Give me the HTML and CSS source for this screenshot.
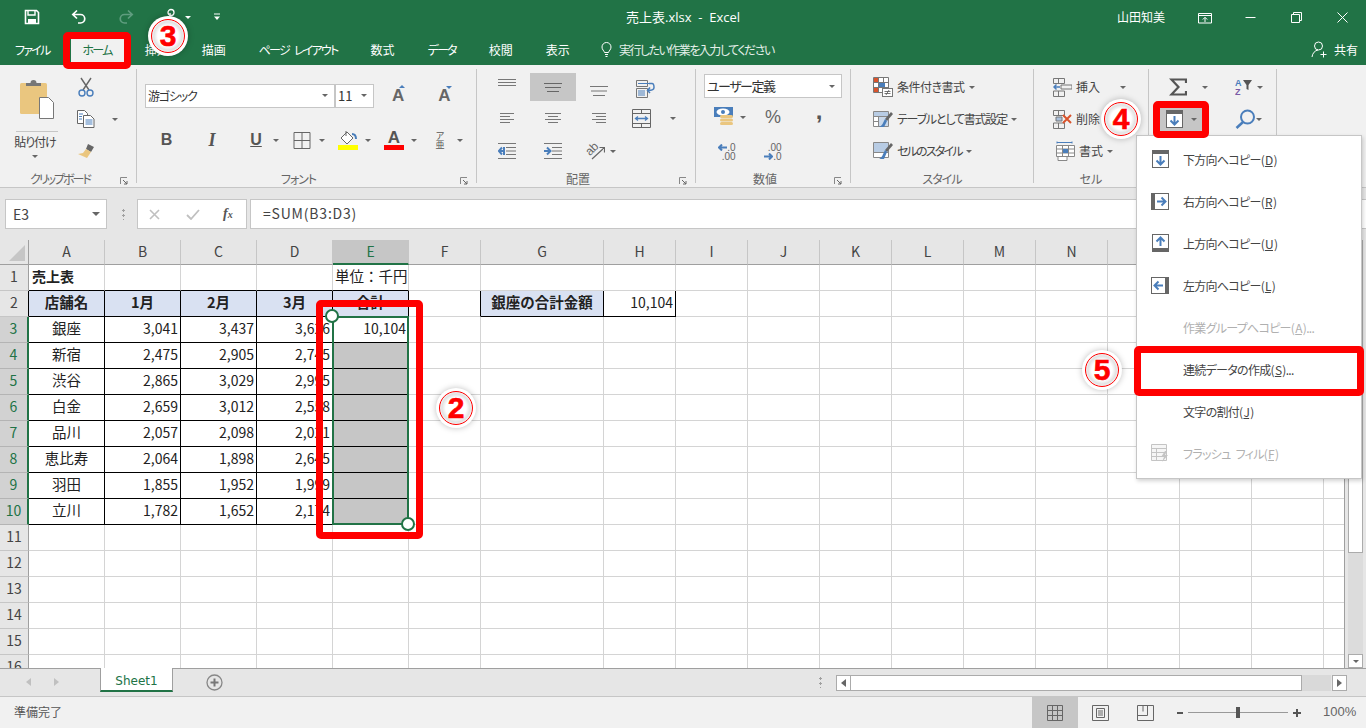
FILE: index.html
```html
<!DOCTYPE html>
<html lang="ja">
<head>
<meta charset="utf-8">
<title>売上表.xlsx - Excel</title>
<link rel="stylesheet" href="styles.css">
</head>
<body>
<div class="app">
  <header class="titlebar">
    <div class="qat">
      <svg class="q-save" width="16" height="16" viewBox="0 0 16 16"><path d="M1.5 1.5h11l2 2v11h-13z" fill="none" stroke="#fff" stroke-width="1.6"/><path d="M4 2v4h7V2" fill="none" stroke="#fff" stroke-width="1.4"/><rect x="4" y="10" width="8" height="5" fill="#fff"/></svg>
      <svg class="q-undo" width="16" height="16" viewBox="0 0 16 16"><path d="M6 1.5 1.8 5.5 6 9.5M2 5.5h7.5a4.2 4.2 0 0 1 0 8.5H7" fill="none" stroke="#fff" stroke-width="1.7"/></svg>
      <svg class="q-redo" width="16" height="16" viewBox="0 0 16 16"><path d="M10 1.5l4.2 4-4.2 4M14 5.5H6.500a4.200 4.200 0 0 0 0 8.500H9" fill="none" stroke="#5f9d7f" stroke-width="1.700"/></svg>
      <svg class="q-touch" width="14" height="18" viewBox="0 0 14 18"><circle cx="7" cy="4.500" r="3" fill="none" stroke="#fff" stroke-width="1.300"/><path d="M6 5v9M3 10l3 6h5l1-5-5-2" fill="none" stroke="#fff" stroke-width="1.300"/></svg>
      <i class="caret caret-w q-touch-c"></i>
      <svg class="q-more" width="8" height="8" viewBox="0 0 8 8"><path d="M1 1h6" stroke="#fff"/><path d="M1 3.500h6L4 7z" fill="#fff"/></svg>
    </div>
    <div class="doc-title">売上表.xlsx&nbsp; -&nbsp; Excel</div>
    <div class="winctl">
      <span class="user">山田知美</span>
      <svg class="w-ribbon" width="14" height="12" viewBox="0 0 14 12"><path d="M.5 1.500h13v9.500H.5zM.5 3.500h13M7 10V5.500M4.800 7.500 7 5.300l2.200 2.200" fill="none" stroke="#fff"/></svg>
      <svg class="w-min" width="11" height="11" viewBox="0 0 11 11"><path d="M.500 5.500h10" stroke="#fff"/></svg>
      <svg class="w-max" width="11" height="11" viewBox="0 0 11 11"><path d="M.500 2.500h8v8h-8zM2.500 2.500V.500h8v8h-2" fill="none" stroke="#fff"/></svg>
      <svg class="w-close" width="11" height="11" viewBox="0 0 11 11"><path d="M.500.500l10 10M10.500.500l-10 10" stroke="#fff"/></svg>
    </div>
  </header>

  <nav class="tabs">
    <span class="tab tab-k">ファイル</span>
    <span class="tab tab-k tab-on">ホーム</span>
    <span class="tab">挿入</span>
    <span class="tab">描画</span>
    <span class="tab tab-k">ページ レイアウト</span>
    <span class="tab">数式</span>
    <span class="tab tab-k">データ</span>
    <span class="tab">校閲</span>
    <span class="tab">表示</span>
    <span class="tell">
      <svg width="11" height="15" viewBox="0 0 11 15"><path d="M3.500 10.500C3 8.500 1 7.800 1 5a4.500 4.500 0 0 1 9 0c0 2.800-2 3.500-2.500 5.500zM4 12.500h3M4.500 14.500h2" fill="none" stroke="#fff"/></svg>
      <span class="tell-t">実行したい作業を入力してください</span>
    </span>
    <span class="share">
      <svg width="17" height="17" viewBox="0 0 17 17"><circle cx="7.500" cy="5" r="4" fill="none" stroke="#fff"/><path d="M1 16c.5-4 3-6.500 6-7M12.500 10.500v6M9.500 13.500h6" fill="none" stroke="#fff"/></svg>
      共有
    </span>
  </nav>

  <section class="ribbon">
    <div class="group g-clip">
      <div class="body clip-body">
        <div class="paste">
          <svg width="36" height="42" viewBox="0 0 36 42"><rect x="1" y="5" width="27" height="31" rx="1.500" fill="#eac67f"/><path d="M7 8V5h4.500a3 3 0 0 1 6 0H22v3z" fill="#777"/><path d="M20.500 19.500h9l5 5v16h-14z" fill="#fff" stroke="#777"/></svg>
          <hr class="paste-rule">
          <span class="paste-label">貼り付け</span>
          <i class="caret"></i>
        </div>
        <div class="clip-tools">
          <div class="clip-row"><svg width="18" height="20" viewBox="0 0 18 20"><path d="M4 1l8 12M14 1L6 13" stroke="#666" stroke-width="1.400" fill="none"/><circle cx="5" cy="16" r="3" fill="none" stroke="#4a7ebb" stroke-width="1.400"/><circle cx="13" cy="16" r="3" fill="none" stroke="#4a7ebb" stroke-width="1.400"/></svg></div>
          <div class="clip-row clip-copy"><svg width="18" height="18" viewBox="0 0 18 18"><path d="M.500.500h7l3 3v10H.500z" fill="#fff" stroke="#666"/><path d="M6.500 5.500h7l3.500 3.500v8.500H6.500z" fill="#fff" stroke="#666"/><path d="M2 4h4M2 6.500h3M2 9h3M8.500 10h7M8.500 12h7M8.500 14h7" stroke="#4a7ebb"/></svg><i class="caret caret-copy"></i></div>
          <div class="clip-row"><svg width="18" height="16" viewBox="0 0 18 16"><path d="M11 1l6 3-3 5-5-3z" fill="#666"/><path d="M9 6l5 3-4 6-9-4 5-1z" fill="#eac67f"/></svg></div>
        </div>
      </div>
      <div class="label-row"><span class="label lab-clip">クリップボード</span><svg class="launch" width="8" height="8" viewBox="0 0 8 8"><path d="M.500 7V.500H7" fill="none" stroke="#888"/><path d="M3 3l4 4M7 4v3H4" fill="none" stroke="#666"/></svg></div>
    </div>

    <div class="group g-font">
      <div class="body font-body">
        <div class="font-row1">
          <div class="sel sel-font">游ゴシック<i class="caret"></i></div>
          <div class="sel sel-size">11<i class="caret"></i></div>
          <span class="grow"><b class="glyph-a">A</b><i class="tri-up"></i></span>
          <span class="shrink"><b class="glyph-a">A</b><i class="tri-down"></i></span>
        </div>
        <div class="font-row2">
          <b class="fbtn f-b">B</b>
          <b class="fbtn f-i">I</b>
          <div class="ftool"><b class="f-u">U</b><i class="caret"></i></div>
          <div class="ftool"><svg width="20" height="17" viewBox="0 0 17 17"><path d="M.500.500h16v16H.500zM8.500.500v16M.500 8.500h16" fill="none" stroke="#666"/></svg><i class="caret"></i></div>
          <div class="ftool"><span class="stack"><svg width="20" height="14" viewBox="0 0 20 14"><path d="M9 1l6 6-6 6-6-6z" fill="#fff" stroke="#666"/><path d="M8 0v5" stroke="#666"/><path d="M14 3c3 0 4 2 4 5" fill="none" stroke="#4a7ebb" stroke-width="2"/></svg><i class="bar bar-y"></i></span><i class="caret"></i></div>
          <div class="ftool"><span class="stack"><b class="f-color">A</b><i class="bar bar-r"></i></span><i class="caret"></i></div>
          <div class="ftool"><span class="phon"><span>ア</span><span>亜</span></span><i class="caret"></i></div>
        </div>
      </div>
      <div class="label-row"><span class="label lab-k">フォント</span><svg class="launch" width="8" height="8" viewBox="0 0 8 8"><path d="M.500 7V.500H7" fill="none" stroke="#888"/><path d="M3 3l4 4M7 4v3H4" fill="none" stroke="#666"/></svg></div>
    </div>

    <div class="group g-align">
      <div class="body align-body">
        <div class="acell"><svg class="ic-top" width="18" height="7" viewBox="0 0 18 7"><path d="M0 .500h18M0 3.500h18M0 6.500h18" stroke="#777"/></svg></div>
        <div class="acell acell-on"><svg width="18" height="9" viewBox="0 0 18 9"><path d="M0 .500h18M1 4.500h16M3 8.500h12" stroke="#666"/></svg></div>
        <div class="acell"><svg class="ic-bot" width="18" height="10" viewBox="0 0 18 10"><path d="M0 .500h18M1 5h16M3 9.500h12" stroke="#777"/></svg></div>
        <div class="acell acell-wrap"><svg width="19" height="18" viewBox="0 0 19 18"><path d="M.500.500h11v6H.500zM.500 8.500h11v9H.500z" fill="none" stroke="#777"/><path d="M2 3.500h11M2 11h7M2 13h7M2 15h7" stroke="#4a7ebb"/><path d="M13 3.500h3c2 0 2 2 2 4 0 2-3 3-6 3M14 7.500l-2.500 3L14 13" fill="none" stroke="#4a7ebb" stroke-width="1.500"/></svg></div>

        <div class="acell"><svg width="14" height="10" viewBox="0 0 14 10"><path d="M0 .500h14M0 3.500h10M0 6.500h14M0 9.500h10" stroke="#777"/></svg></div>
        <div class="acell"><svg width="16" height="10" viewBox="0 0 16 10"><path d="M0 .500h16M3 3.500h10M0 6.500h16M3 9.500h10" stroke="#777"/></svg></div>
        <div class="acell"><svg width="14" height="10" viewBox="0 0 14 10"><path d="M0 .500h14M4 3.500h10M0 6.500h14M4 9.500h10" stroke="#777"/></svg></div>
        <div class="acell acell-merge"><svg width="19" height="19" viewBox="0 0 19 19"><path d="M.500.500h18v18H.500zM.500 4.500h18M.500 14.500h18M9.500.500v4M9.500 14.500v4" fill="none" stroke="#666"/><path d="M3.500 9.500h12M6 7.500l-2.500 2L6 11.500M13 7.500l2.500 2-2.500 2" fill="none" stroke="#4a7ebb" stroke-width="1.300"/></svg><i class="caret caret-merge"></i></div>

        <div class="acell"><svg width="18" height="16" viewBox="0 0 18 16"><path d="M0 .500h18M8 4.500h10M8 8h10M8 11.500h10M0 15.500h18" stroke="#777"/><path d="M6 4v8M6 8H1M4 4.500 .800 8 4 11.500" fill="none" stroke="#4a7ebb" stroke-width="2"/></svg></div>
        <div class="acell"><svg width="18" height="16" viewBox="0 0 18 16"><path d="M0 .500h18M8 4.500h10M8 8h10M8 11.500h10M0 15.500h18" stroke="#777"/><path d="M0 8h6M3 4.500 6.500 8 3 11.500" fill="none" stroke="#4a7ebb" stroke-width="2"/></svg></div>
        <div class="acell acell-orient"><svg width="19" height="18" viewBox="0 0 19 18"><path d="M6 17 18 6M13.500 5.500H18.500V10.500" fill="none" stroke="#666" stroke-width="1.200"/><text x="0" y="11" class="orient-t" transform="rotate(-45 6 8)">ab</text></svg><i class="caret"></i></div>
        <div class="acell"></div>
      </div>
      <div class="label-row"><span class="label">配置</span><svg class="launch" width="8" height="8" viewBox="0 0 8 8"><path d="M.500 7V.500H7" fill="none" stroke="#888"/><path d="M3 3l4 4M7 4v3H4" fill="none" stroke="#666"/></svg></div>
    </div>

    <div class="group g-num">
      <div class="body num-body">
        <div class="sel sel-num">ユーザー定義<i class="caret"></i></div>
        <div class="num-row">
          <div class="ncell ncell-cur"><svg width="19" height="20" viewBox="0 0 19 20"><rect x="0" y="0" width="19" height="10" fill="#4a7ebb"/><ellipse cx="9" cy="5" rx="6.500" ry="3.500" fill="#fff"/><circle cx="9" cy="5" r="2" fill="#4a7ebb"/><rect x="6" y="8" width="13" height="3" rx="1.500" fill="#eac67f"/><rect x="6" y="11.500" width="13" height="3" rx="1.500" fill="#eac67f"/><rect x="6" y="15" width="13" height="3" rx="1.500" fill="#eac67f"/></svg><i class="caret"></i></div>
          <div class="ncell n-pct">%</div>
          <div class="ncell n-comma">,</div>
        </div>
        <div class="num-row num-row2">
          <div class="ncell"><div class="dec dec-a"><div><svg width="9" height="7" viewBox="0 0 9 7"><path d="M4 .500 1 3.500l3 3M1 3.500h8" fill="none" stroke="#4a7ebb" stroke-width="2"/></svg>.0</div><div>.00</div></div></div>
          <div class="ncell"><div class="dec dec-b"><div>.00</div><div><svg width="9" height="7" viewBox="0 0 9 7"><path d="M5 .500l3 3-3 3M8 3.500H0" fill="none" stroke="#4a7ebb" stroke-width="2"/></svg>.0</div></div></div>
          <div class="ncell"></div>
        </div>
      </div>
      <div class="label-row"><span class="label">数値</span><svg class="launch" width="8" height="8" viewBox="0 0 8 8"><path d="M.500 7V.500H7" fill="none" stroke="#888"/><path d="M3 3l4 4M7 4v3H4" fill="none" stroke="#666"/></svg></div>
    </div>

    <div class="group g-style">
      <div class="body list-body">
        <div class="lrow"><svg width="20" height="20" viewBox="0 0 20 20"><path d="M.500.500h15v15H.500zM.500 5.500h15M.500 10.500h15M5.500.500v15M10.500.500v15" fill="#fff" stroke="#777"/><rect x="1" y="1" width="4" height="4" fill="#d9532c"/><rect x="6" y="6" width="6" height="4" fill="#4a7ebb"/><rect x="1" y="11" width="4" height="4" fill="#d9532c"/><rect x="9.500" y="11.500" width="10" height="8" fill="#fff" stroke="#777"/><path d="M11.500 14.500h6M11.500 16.500h6M13 18l3-5" stroke="#555" stroke-width=".8"/></svg><span class="ls1">条件付き書式</span><i class="caret"></i></div>
        <div class="lrow"><svg width="20" height="20" viewBox="0 0 20 20"><path d="M.500 2.500h15v15H.500zM.500 7.500h15M.500 12.500h15M5.500 2.500v15M10.500 2.500v15" fill="#fff" stroke="#888"/><rect x="1" y="3" width="14" height="4" fill="#b8cce4"/><rect x="6" y="8" width="9" height="9" fill="#c9d8ea"/><path d="M18 3l2 2-6 7-2-2z" fill="#666"/><path d="M12 10l2 2-3 6H6c3-1 4-4 6-8z" fill="#4a7ebb"/></svg><span class="ls2">テーブルとして書式設定</span><i class="caret"></i></div>
        <div class="lrow"><svg width="20" height="20" viewBox="0 0 20 20"><path d="M.500 1.500h15v15H.500zM.500 6.500h15M.500 11.500h15" fill="#fff" stroke="#888"/><rect x="1" y="2" width="14" height="9" fill="#b8cce4"/><path d="M18 2l2 2-6 7-2-2z" fill="#666"/><path d="M12 9l2 2-3 7H6c3-1 4-5 6-9z" fill="#4a7ebb"/></svg><span class="ls3">セルのスタイル</span><i class="caret"></i></div>
      </div>
      <div class="label-row"><span class="label lab-k">スタイル</span></div>
    </div>

    <div class="group g-cells">
      <div class="body list-body">
        <div class="lrow"><svg width="19" height="19" viewBox="0 0 19 19"><path d="M.500.500h11v5H.500zM5.500.500v5M.500 13h11v5.500H.500zM5.500 13v5.500M8 7h11v4H8z" fill="none" stroke="#777"/><path d="M7 9H1M3.500 6.500 1 9l2.500 2.500" fill="none" stroke="#4a7ebb" stroke-width="1.500"/></svg><span class="cell-t">挿入</span><i class="caret caret-ins"></i></div>
        <div class="lrow"><svg width="19" height="19" viewBox="0 0 19 19"><path d="M.500.500h11v5H.500zM5.500.500v5M.500 13h11v5.500H.500zM5.500 13v5.500" fill="none" stroke="#777"/><path d="M3 7h6v4H3z" fill="#a9c0dc" stroke="#777"/><path d="M10 5l8 8M18 5l-8 8" stroke="#d9532c" stroke-width="2"/></svg><span class="cell-t">削除</span></div>
        <div class="lrow lrow-fmt"><svg width="19" height="20" viewBox="0 0 19 20"><path d="M1 1.500h15M1 .500v2M16 .500v2" stroke="#4a7ebb"/><path d="M.500 4.500h18v11H.500zM6.500 4.500v11M12.500 4.500v11M.500 8h18M.500 12h18M2 15.500v4h9v-4" fill="#fff" stroke="#888"/><rect x="7" y="8" width="5" height="4" fill="#4a7ebb"/></svg><span class="cell-t">書式</span><i class="caret"></i></div>
      </div>
      <div class="label-row"><span class="label">セル</span></div>
    </div>

    <div class="group g-edit">
      <div class="body edit-body">
        <div class="ecell ecell-sum"><svg width="18" height="18" viewBox="0 0 18 18"><path d="M17 5V1.500H2.500L9.500 9l-7 7.500H17V13" fill="none" stroke="#555" stroke-width="2.200"/></svg><i class="caret"></i></div>
        <div class="ecell2"><svg width="18" height="18" viewBox="0 0 18 18"><text x="0" y="8" class="az az-a">A</text><text x="0" y="17" class="az az-z">Z</text><path d="M8 2h9l-3.500 5v5l-2-1V7z" fill="#555"/></svg><i class="caret"></i></div>
        <div class="ecell fill-on"><svg width="17" height="18" viewBox="0 0 17 18"><rect x=".5" y=".5" width="16" height="17" fill="#fff" stroke="#666"/><rect x="0" y="0" width="17" height="4" fill="#666"/><path d="M8.500 6v9M4.500 10.500l4 4 4-4" fill="none" stroke="#4a7ebb" stroke-width="2"/></svg><i class="caret"></i></div>
        <div class="ecell2 ecell-find"><svg width="21" height="20" viewBox="0 0 21 20"><circle cx="12.500" cy="8" r="6.500" fill="none" stroke="#4a7ebb" stroke-width="2"/><path d="M8 13 1.500 19" stroke="#4a7ebb" stroke-width="2.500"/></svg><i class="caret"></i></div>
      </div>
      <div class="label-row"></div>
    </div>
  </section>

  <section class="formula">
    <div class="namebox">E3<i class="caret caret-name"></i></div>
    <span class="fdots"></span>
    <div class="fbox">
      <svg width="11" height="11" viewBox="0 0 11 11"><path d="M1 1l9 9M10 1l-9 9" stroke="#c0c0c0" stroke-width="1.600"/></svg>
      <svg width="14" height="11" viewBox="0 0 14 11"><path d="M1 6l4 4 8-9" fill="none" stroke="#c0c0c0" stroke-width="1.800"/></svg>
      <span class="fx">f<small>x</small></span>
    </div>
    <div class="finput">=SUM(B3:D3)</div>
  </section>

  <section class="sheet">
    <div class="sheet-view">
      <table class="grid">
        <colgroup><col class="c-rh"><col class="c-w"><col class="c-w"><col class="c-w"><col class="c-w"><col class="c-w"><col class="c-n"><col class="c-g"><col class="c-n"><col class="c-n"><col class="c-n"><col class="c-n"><col class="c-n"><col class="c-n"><col class="c-n"><col class="c-n"><col class="c-n"><col class="c-n"><col class="c-r"></colgroup>
        <thead>
          <tr><th class="corner"><i class="corner-tri"></i></th><th>A</th><th>B</th><th>C</th><th>D</th><th class="h-on">E</th><th>F</th><th>G</th><th>H</th><th>I</th><th>J</th><th>K</th><th>L</th><th>M</th><th>N</th><th>O</th><th>P</th><th>Q</th><th>R</th></tr>
        </thead>
        <tbody>
          <tr><th class="rh">1</th><td class="title bb">売上表</td><td class="bb"></td><td class="bb"></td><td class="bb"></td><td class="num bb unit">単位&#xFF1A;千円</td><td></td><td></td><td></td><td></td><td></td><td></td><td></td><td></td><td></td><td></td><td></td><td></td><td></td></tr>
          <tr><th class="rh rh-b">2</th><td class="hd">店舗名</td><td class="hd">1月</td><td class="hd">2月</td><td class="hd">3月</td><td class="hd">合計</td><td class="bl"></td><td class="hd-g">銀座の合計金額</td><td class="num k">10,104</td><td></td><td></td><td></td><td></td><td></td><td></td><td></td><td></td><td></td><td></td></tr>
          <tr><th class="rh rh-on">3</th><td class="ctr k">銀座</td><td class="num k">3,041</td><td class="num k">3,437</td><td class="num k">3,626</td><td class="num k">10,104</td><td class="tb"></td><td class="tb"></td><td class="tb"></td><td></td><td></td><td></td><td></td><td></td><td></td><td></td><td></td><td></td><td></td></tr>
          <tr><th class="rh rh-on">4</th><td class="ctr k">新宿</td><td class="num k">2,475</td><td class="num k">2,905</td><td class="num k">2,745</td><td class="k sel-c"></td><td></td><td></td><td></td><td></td><td></td><td></td><td></td><td></td><td></td><td></td><td></td><td></td><td></td></tr>
          <tr><th class="rh rh-on">5</th><td class="ctr k">渋谷</td><td class="num k">2,865</td><td class="num k">3,029</td><td class="num k">2,995</td><td class="k sel-c"></td><td></td><td></td><td></td><td></td><td></td><td></td><td></td><td></td><td></td><td></td><td></td><td></td><td></td></tr>
          <tr><th class="rh rh-on">6</th><td class="ctr k">白金</td><td class="num k">2,659</td><td class="num k">3,012</td><td class="num k">2,558</td><td class="k sel-c"></td><td></td><td></td><td></td><td></td><td></td><td></td><td></td><td></td><td></td><td></td><td></td><td></td><td></td></tr>
          <tr><th class="rh rh-on">7</th><td class="ctr k">品川</td><td class="num k">2,057</td><td class="num k">2,098</td><td class="num k">2,021</td><td class="k sel-c"></td><td></td><td></td><td></td><td></td><td></td><td></td><td></td><td></td><td></td><td></td><td></td><td></td><td></td></tr>
          <tr><th class="rh rh-on">8</th><td class="ctr k">恵比寿</td><td class="num k">2,064</td><td class="num k">1,898</td><td class="num k">2,645</td><td class="k sel-c"></td><td></td><td></td><td></td><td></td><td></td><td></td><td></td><td></td><td></td><td></td><td></td><td></td><td></td></tr>
          <tr><th class="rh rh-on">9</th><td class="ctr k">羽田</td><td class="num k">1,855</td><td class="num k">1,952</td><td class="num k">1,999</td><td class="k sel-c"></td><td></td><td></td><td></td><td></td><td></td><td></td><td></td><td></td><td></td><td></td><td></td><td></td><td></td></tr>
          <tr><th class="rh rh-on">10</th><td class="ctr k">立川</td><td class="num k">1,782</td><td class="num k">1,652</td><td class="num k">2,174</td><td class="k sel-c"></td><td></td><td></td><td></td><td></td><td></td><td></td><td></td><td></td><td></td><td></td><td></td><td></td><td></td></tr>
          <tr><th class="rh">11</th><td></td><td></td><td></td><td></td><td></td><td></td><td></td><td></td><td></td><td></td><td></td><td></td><td></td><td></td><td></td><td></td><td></td><td></td></tr>
          <tr><th class="rh">12</th><td></td><td></td><td></td><td></td><td></td><td></td><td></td><td></td><td></td><td></td><td></td><td></td><td></td><td></td><td></td><td></td><td></td><td></td></tr>
          <tr><th class="rh">13</th><td></td><td></td><td></td><td></td><td></td><td></td><td></td><td></td><td></td><td></td><td></td><td></td><td></td><td></td><td></td><td></td><td></td><td></td></tr>
          <tr><th class="rh">14</th><td></td><td></td><td></td><td></td><td></td><td></td><td></td><td></td><td></td><td></td><td></td><td></td><td></td><td></td><td></td><td></td><td></td><td></td></tr>
          <tr><th class="rh">15</th><td></td><td></td><td></td><td></td><td></td><td></td><td></td><td></td><td></td><td></td><td></td><td></td><td></td><td></td><td></td><td></td><td></td><td></td></tr>
          <tr><th class="rh">16</th><td></td><td></td><td></td><td></td><td></td><td></td><td></td><td></td><td></td><td></td><td></td><td></td><td></td><td></td><td></td><td></td><td></td><td></td></tr>
        </tbody>
      </table>
      <div class="selection"></div>
      <i class="handle handle-a"></i>
      <i class="handle handle-b"></i>
    </div>
    <div class="vscroll">
      <div class="vs-btn"><i class="tri-up-s"></i></div>
      <div class="vs-thumb"></div>
      <div class="vs-track"></div>
      <div class="vs-btn"><i class="caret"></i></div>
    </div>
  </section>

  <section class="sheetbar">
    <div class="nav-arrows"><i class="nav-l"></i><i class="nav-r"></i></div>
    <div class="sheet-tab">Sheet1</div>
    <svg class="add" width="17" height="17" viewBox="0 0 17 17"><circle cx="8.500" cy="8.500" r="7.500" fill="none" stroke="#888" stroke-width="1.300"/><path d="M8.500 4.500v8M4.500 8.500h8" stroke="#777" stroke-width="2"/></svg>
    <span class="hdots"></span>
    <div class="hscroll">
      <div class="hs-btn"><i class="nav-l nav-d"></i></div>
      <div class="hs-thumb"></div>
      <div class="hs-track"></div>
      <div class="hs-btn"><i class="nav-r nav-d"></i></div>
    </div>
  </section>

  <footer class="status">
    <span class="ready">準備完了</span>
    <div class="views">
      <div class="view view-on"><svg width="16" height="16" viewBox="0 0 16 16"><path d="M.500.500h15v15H.500zM5.500.500v15M10.500.500v15M.500 5.500h15M.500 10.500h15" fill="none" stroke="#666"/></svg></div>
      <div class="view"><svg width="17" height="16" viewBox="0 0 17 16"><path d="M.500.500h16v15H.500z" fill="none" stroke="#666"/><path d="M4.500 3.500h8v9h-8zM6 6h5M6 8h5M6 10h5" fill="none" stroke="#666"/></svg></div>
      <div class="view"><svg width="17" height="16" viewBox="0 0 17 16"><path d="M.500.500h16v15H.500zM.500 10.500h10V.500M6 .500v6" fill="none" stroke="#666"/></svg></div>
    </div>
    <div class="zoom">
      <svg width="6" height="2" viewBox="0 0 6 2"><rect width="6" height="2" fill="#555"/></svg>
      <div class="slider"><i class="knob"></i></div>
      <svg width="8" height="8" viewBox="0 0 8 8"><path d="M4 0v8M0 4h8" stroke="#555" stroke-width="2"/></svg>
    </div>
    <span class="pct">100%</span>
  </footer>
</div>

<div class="menu">
  <div class="mi"><span class="mi-ic"><svg width="17" height="18" viewBox="0 0 17 18"><rect x=".5" y=".5" width="16" height="17" fill="#fff" stroke="#666"/><rect width="17" height="4" fill="#666"/><path d="M8.500 6v9M4.500 10.500l4 4 4-4" fill="none" stroke="#4a7ebb" stroke-width="2"/></svg></span><span>下方向へコピー(<u>D</u>)</span></div>
  <div class="mi"><span class="mi-ic"><svg width="18" height="17" viewBox="0 0 18 17"><rect x=".5" y=".5" width="17" height="16" fill="#fff" stroke="#666"/><rect width="4" height="17" fill="#666"/><path d="M6 8.500h9M10.500 4.500l4 4-4 4" fill="none" stroke="#4a7ebb" stroke-width="2"/></svg></span><span>右方向へコピー(<u>R</u>)</span></div>
  <div class="mi"><span class="mi-ic"><svg width="17" height="18" viewBox="0 0 17 18"><rect x=".5" y=".5" width="16" height="17" fill="#fff" stroke="#666"/><rect y="14" width="17" height="4" fill="#666"/><path d="M8.500 12V3M4.500 7.500l4-4 4 4" fill="none" stroke="#4a7ebb" stroke-width="2"/></svg></span><span>上方向へコピー(<u>U</u>)</span></div>
  <div class="mi"><span class="mi-ic"><svg width="18" height="17" viewBox="0 0 18 17"><rect x=".5" y=".5" width="17" height="16" fill="#fff" stroke="#666"/><rect x="14" width="4" height="17" fill="#666"/><path d="M12 8.500H3M7.500 4.500l-4 4 4 4" fill="none" stroke="#4a7ebb" stroke-width="2"/></svg></span><span>左方向へコピー(<u>L</u>)</span></div>
  <div class="mi mi-off"><span class="mi-ic"></span><span>作業グループへコピー(<u>A</u>)...</span></div>
  <div class="mi"><span class="mi-ic"></span><span>連続データの作成(<u>S</u>)...</span></div>
  <div class="mi"><span class="mi-ic"></span><span>文字の割付(<u>J</u>)</span></div>
  <div class="mi mi-off"><span class="mi-ic"><svg width="18" height="18" viewBox="0 0 18 18"><path d="M.500.500h15v16H.500zM.500 4.500h15M.500 8.500h15M.500 12.500h15M5.500 4.500v12" fill="#f6f6f6" stroke="#c4c4c4"/><path d="M14 7l-4 6h3l-2 5 6-7h-3l2-4z" fill="#c4c4c4"/></svg></span><span>フラッシュ フィル(<u>F</u>)</span></div>
</div>

<div class="redbox rb-home"></div>
<div class="redbox rb-range"></div>
<div class="redbox rb-fill"></div>
<div class="redbox rb-series"></div>

<div class="callout co-2"><span>2</span></div>
<div class="callout co-3"><span>3</span></div>
<div class="callout co-4"><span>4</span></div>
<div class="callout co-5"><span>5</span></div>
</body>
</html>
```
FILE: styles.css
```css
* { box-sizing: border-box; }
html, body { margin: 0; padding: 0; }
body {
  position: relative;
  width: 1366px;
  height: 728px;
  overflow: hidden;
  font-family: "Noto Sans CJK JP", "Noto Sans", sans-serif;
  font-size: 12px;
  color: #444;
  background: #f1f1f1;
}
svg { display: block; flex: none; }
i { display: block; font-style: normal; }
.app { display: flex; flex-direction: column; width: 1366px; height: 728px; }

.caret { width: 0; height: 0; flex: none; border: 3px solid transparent; border-top: 3.5px solid #666; border-bottom: 0; }
.caret-w { border-top-color: #fff; }

/* Title bar */
.titlebar { flex: none; height: 36px; background: #217346; color: #fff; display: grid; grid-template-columns: 1fr auto 1fr; align-items: center; padding-bottom: 3px; }
.qat { display: flex; align-items: center; padding-left: 24px; margin-top: 1px; }
.q-undo { margin-left: 31px; }
.q-redo { margin-left: 31px; }
.q-touch { margin-left: 30px; }
.q-touch-c { margin-left: 7px; }
.q-more { margin-left: 22px; }
.doc-title { font-family: "Open Sans", "Noto Sans CJK JP", sans-serif; font-size: 13px; font-feature-settings: "palt"; }
.winctl { display: flex; align-items: center; justify-content: flex-end; }
.user { font-size: 12px; margin-right: 33px; }
.w-ribbon, .w-min, .w-max, .w-close { margin-top: 2px; }
.w-min { margin-left: 33px; }
.w-max { margin-left: 35px; }
.w-close { margin-left: 35px; margin-right: 18px; }

/* Tabs */
.tabs { flex: none; height: 29px; padding-bottom: 3px; background: #217346; color: #fff; display: flex; align-items: center; gap: 33px; padding-left: 15px; font-size: 12px; font-feature-settings: "palt"; white-space: nowrap; }
.tab-k { letter-spacing: -1.75px; word-spacing: 4px; }
.tab-on { color: #217346; background: #f1f1f1; align-self: stretch; display: flex; align-items: center; margin: 3px -12px -3px; padding: 0 12px 6px; }
.tell { display: flex; align-items: center; gap: 7px; margin-left: -2px; color: #e4efe9; }
.tell-t { letter-spacing: -1.5px; }
.share { display: flex; align-items: center; gap: 6px; margin-left: auto; margin-right: 8px; }

/* Ribbon */
.ribbon { flex: none; height: 123px; background: #f1f1f1; display: flex; padding-top: 4px; border-bottom: 1px solid #c6c6c6; font-feature-settings: "palt"; }
.group { height: 114px; border-right: 1px solid #c6c6c6; display: flex; flex-direction: column; }
.g-clip { width: 137px; }
.g-font { width: 340px; }
.g-align { width: 219px; }
.g-num { width: 155px; }
.g-style { width: 183px; }
.g-cells { width: 115px; }
.g-edit { width: 128px; }
.body { height: 103px; flex: none; }
.label-row { display: flex; align-items: center; height: 16px; margin-top: -1px; color: #666; }
.label { flex: 1; text-align: center; line-height: 16px; }
.lab-clip { letter-spacing: -2px; }
.lab-k { letter-spacing: -1px; }
.launch { margin-right: 8px; margin-top: 3px; }

/* Clipboard */
.clip-body { display: flex; }
.paste { width: 74px; display: flex; flex-direction: column; align-items: center; padding-top: 9px; }
.paste-rule { width: 42px; height: 1px; border: 0; background: #c6c6c6; margin: 11px 0 0; }
.paste-label { line-height: 20px; margin-left: -4px; white-space: nowrap; letter-spacing: -1px; }
.paste .caret { margin: 3px 0 0 -4px; }
.clip-tools { display: flex; flex-direction: column; padding-top: 2px; }
.clip-row { height: 32px; display: flex; align-items: center; padding-left: 3px; }
.caret-copy { margin-left: 17px; }

/* Font */
.font-body { padding: 15px 0 0 8px; }
.font-row1 { display: flex; align-items: center; height: 23px; }
.sel { height: 24px; background: #fff; border: 1px solid #c6c6c6; display: flex; align-items: center; justify-content: space-between; padding: 0 6px 0 2px; color: #333; font-size: 12px; white-space: nowrap; }
.sel-font { width: 190px; letter-spacing: -1.2px; }
.sel-size { width: 39px; font-size: 13px; }
.glyph-a { font-family: "Liberation Sans", sans-serif; font-size: 17px; color: #666; line-height: 17px; font-weight: bold; }
.grow, .shrink { display: flex; align-items: flex-start; margin-left: 18px; }
.shrink { margin-left: 33px; }
.tri-up { width: 0; height: 0; border: 3px solid transparent; border-bottom: 3px solid #4a7ebb; border-top: 0; margin: -2px 0 0 -5px; }
.tri-down { width: 0; height: 0; border: 3px solid transparent; border-top: 3px solid #4a7ebb; border-bottom: 0; margin: -1px 0 0 -5px; }
.font-row2 { display: flex; align-items: center; height: 34px; margin: 16px 0 0 -1px; }
.fbtn { font-family: "Liberation Sans", sans-serif; font-size: 16px; color: #555; text-align: center; }
.f-b { width: 46px; font-weight: bold; }
.f-i { width: 47px; font-family: "Liberation Serif", serif; font-style: italic; font-size: 18px; margin-right: 11px; }
.ftool { width: 46px; flex: none; display: flex; align-items: center; gap: 7px; }
.ftool > b, .ftool > svg, .stack, .phon { width: 20px; flex: none; }
.f-u { font-family: "Liberation Sans", sans-serif; font-size: 16px; color: #555; text-align: center; text-decoration: underline; }
.stack { display: flex; flex-direction: column; align-items: center; }
.bar { width: 20px; height: 5px; }
.bar-y { background: #ff0; }
.bar-r { background: #f00; }
.f-color { font-family: "Liberation Sans", sans-serif; font-size: 17px; line-height: 14px; color: #555; }
.phon { display: flex; flex-direction: column; align-items: center; font-size: 9px; line-height: 9px; color: #555; }

/* Alignment */
.align-body { display: grid; grid-template-columns: 46px 46px 46px 70px; grid-template-rows: 28px 34px 32px; padding: 4px 0 0 7px; align-items: center; justify-items: center; }
.acell { width: 100%; height: 100%; display: flex; align-items: center; justify-content: center; }
.acell-on { background: #c6c6c6; }
.ic-top { margin-top: -10px; }
.ic-bot { margin-top: 8px; }
.acell-wrap { justify-content: flex-start; padding-left: 14px; margin-top: 3px; }
.acell-merge { justify-content: flex-start; padding-left: 10px; }
.caret-merge { margin-left: 19px; }
.acell-orient { gap: 5px; padding-left: 4px; }
.orient-t { font-family: "Liberation Sans", sans-serif; font-size: 12px; fill: #666; }

/* Number */
.num-body { padding: 5px 0 0 8px; }
.sel-num { width: 138px; height: 24px; font-size: 13px; letter-spacing: -1.5px; padding-bottom: 2px; }
.sel-num .caret { margin-top: 2px; }
.num-row { display: grid; grid-template-columns: 46px 46px 46px; height: 36px; margin-top: 1px; }
.num-row2 { height: 32px; margin-top: 1px; }
.ncell { display: flex; align-items: center; justify-content: center; }
.ncell-cur { justify-content: flex-start; padding-left: 10px; gap: 7px; }
.n-pct { font-family: "Liberation Sans", sans-serif; font-size: 18px; color: #666; }
.n-comma { font-family: "Liberation Sans", sans-serif; font-size: 24px; font-weight: bold; color: #555; line-height: 18px; padding-bottom: 12px; }
.dec { font-family: "Liberation Sans", sans-serif; font-size: 10px; line-height: 9px; color: #666; }
.dec > div { display: flex; align-items: center; justify-content: flex-end; height: 9px; }

/* Style & Cells lists */
.list-body { padding-top: 2px; }
.lrow { height: 32px; display: flex; align-items: center; gap: 4px; white-space: nowrap; color: #444; }
.lrow > span { padding-bottom: 2px; }
.lrow .caret { margin-left: 0; }
.ls1 { letter-spacing: -.5px; }
.ls2 { letter-spacing: -1.2px; }
.ls3 { letter-spacing: -1.8px; }
.g-style .lrow { padding-left: 22px; }
.g-cells .lrow { padding-left: 19px; }
.g-cells .lrow-fmt { padding-left: 22px; }
.g-cells .caret-ins { margin-left: 16px; }

/* Editing */
.edit-body { display: grid; grid-template-columns: 43px 75px; grid-template-rows: 32px 32px; padding: 2px 0 0 11px; }
.ecell { display: flex; align-items: center; justify-content: center; gap: 8px; }
.ecell-sum { justify-content: flex-start; gap: 0; padding-left: 9px; }
.ecell-sum .caret { margin-left: 15px; flex: none; }
.ecell2 { display: flex; align-items: center; gap: 4px; padding-left: 32px; }
.ecell-find { gap: 0; }
.az { font-family: "Liberation Sans", sans-serif; font-size: 9px; font-weight: bold; }
.az-a { fill: #4a7ebb; }
.az-z { fill: #7a5ba6; }
.fill-on { background: #c6c6c6; height: 23px; align-self: center; }

/* Formula bar */
.formula { flex: none; height: 52px; background: #e6e6e6; padding: 11px 0 11px 5px; display: flex; }
.namebox { width: 102px; height: 30px; background: #fff; border: 1px solid #c6c6c6; display: flex; align-items: center; justify-content: space-between; padding: 0 6px 0 7px; font-size: 14px; color: #444; }
.caret-name { border-width: 4px; border-top-width: 4px; border-bottom-width: 0; }
.fdots { width: 3px; height: 12px; margin: 9px 12px 0 15px; background: radial-gradient(circle, #a0a0a0 1.200px, transparent 1.400px) 0 0 / 3px 5px; }
.fbox { width: 110px; height: 30px; background: #fff; border: 1px solid #c6c6c6; display: flex; align-items: center; gap: 26px; padding: 0 12px 0 11px; }
.fx { font-family: "Liberation Serif", serif; font-style: italic; font-weight: bold; font-size: 14px; color: #555; white-space: nowrap; margin-left: -3px; }
.fx small { font-size: 10px; }
.finput { flex: 1; height: 30px; margin-left: 3px; background: #fff; border: 1px solid #c6c6c6; border-right: 0; padding-left: 12px; line-height: 26px; font-size: 14px; color: #444; letter-spacing: .8px; }

/* Sheet */
.sheet { flex: none; height: 428px; display: flex; background: #e6e6e6; }
.sheet-view { position: relative; width: 1344px; height: 428px; overflow: hidden; background: #fff; }
.grid { table-layout: fixed; border-collapse: separate; border-spacing: 0; width: 1344px; font-size: 14px; color: #222; line-height: 20px; }
.c-rh { width: 29px; }
.c-w { width: 76px; }
.c-n { width: 72px; }
.c-g { width: 123px; }
.c-r { width: 21px; }
thead th { height: 25px; padding: 0 0 2px; background: #e6e6e6; border-right: 1px solid #c6c6c6; border-bottom: 1px solid #9f9f9f; font-weight: 400; color: #444; text-align: center; }
.corner { position: relative; border-right-color: #9f9f9f; }
.corner-tri { position: absolute; right: 3px; bottom: 3px; width: 0; height: 0; border-style: solid; border-width: 0 0 16px 16px; border-color: transparent transparent #c6c6c6 transparent; }
.h-on { background: #c6c6c6 !important; border-bottom: 2px solid #217346 !important; color: #217346 !important; }
.rh { height: 26px; padding: 0 0 4px; background: #e6e6e6; border-right: 1px solid #9f9f9f; border-bottom: 1px solid #c6c6c6; font-weight: 400; color: #444; text-align: center; }
.rh-b { border-right-color: #000; }
.rh-on { background: #d2d2d2; border-right: 2px solid #217346; color: #217346; border-bottom-color: #b4b4b4; }
td { height: 26px; padding: 0 2px 4px; border-right: 1px solid #d4d4d4; border-bottom: 1px solid #d4d4d4; white-space: nowrap; overflow: visible; }
.title { font-weight: 700; padding-left: 3px; }
.unit { font-size: 14.5px; }
.bb { border-bottom-color: #000; }
.bl { border-right-color: #000; }
.tb { border-bottom-color: #d4d4d4; }
td.k, td.hd, td.hd-g { border-right-color: #000; border-bottom-color: #000; }
.hd, .hd-g { background: #d9e1f2; font-weight: 700; text-align: center; font-size: 14.5px; }
.hd-g { padding: 0 0 4px; }
.num { text-align: right; }
.ctr { text-align: center; font-size: 14.5px; }
.sel-c { background: #c6c6c6; }
.selection { position: absolute; left: 332px; top: 76px; width: 77px; height: 209px; border: 2px solid #217346; pointer-events: none; }
.handle { position: absolute; width: 14px; height: 14px; border-radius: 50%; background: #fff; border: 2px solid #217346; }
.handle-a { left: 325px; top: 69px; }
.handle-b { left: 401px; top: 277px; }

.vscroll { width: 22px; height: 428px; border-left: 1px solid #9f9f9f; padding-left: 3px; display: flex; flex-direction: column; }
.vs-btn { width: 15px; height: 14px; flex: none; background: #fff; border: 1px solid #ababab; display: flex; align-items: center; justify-content: center; }
.tri-up-s { width: 0; height: 0; border: 3px solid transparent; border-bottom: 3.500px solid #666; border-top: 0; }
.vs-thumb { width: 15px; height: 299px; background: #fff; border: 1px solid #ababab; border-top: 0; }
.vs-track { flex: 1; width: 15px; background: #dcdcdc; }

/* Sheet bar */
.sheetbar { flex: none; height: 29px; background: #e6e6e6; border-top: 1px solid #9f9f9f; border-bottom: 1px solid #c6c6c6; display: flex; align-items: flex-start; }
.nav-arrows { width: 100px; display: flex; padding: 9px 0 0 26px; gap: 23px; }
.nav-l { width: 0; height: 0; border: 4px solid transparent; border-right: 5px solid #c0c0c0; border-left: 0; }
.nav-r { width: 0; height: 0; border: 4px solid transparent; border-left: 5px solid #c0c0c0; border-right: 0; }
.nav-d { border-right-color: #666; border-left-color: #666; }
.sheet-tab { width: 73px; height: 24px; margin-top: -1px; background: #fff; border-left: 1px solid #9f9f9f; border-right: 1px solid #9f9f9f; border-bottom: 2px solid #217346; color: #217346; text-align: center; font-family: "DejaVu Sans", sans-serif; font-size: 12px; line-height: 27px; overflow: hidden; }
.add { margin: 5px 0 0 33px; }
.hdots { width: 3px; height: 12px; margin: 7px 14px 0 596px; background: radial-gradient(circle, #a0a0a0 1.200px, transparent 1.400px) 0 0 / 3px 5px; }
.hscroll { width: 511px; height: 16px; margin-top: 6px; display: flex; }
.hs-btn { width: 15px; height: 16px; flex: none; background: #fff; border: 1px solid #ababab; display: flex; align-items: center; justify-content: center; }
.hs-thumb { width: 451px; background: #fff; border: 1px solid #ababab; border-left: 0; }
.hs-track { width: 29px; background: #d9d9d9; margin-right: 1px; }

/* Status */
.status { flex: 1; background: #f1f1f1; display: flex; align-items: center; padding-left: 14px; color: #555; }
.ready { font-size: 12px; padding-bottom: 3px; }
.views { display: flex; margin-left: 970px; height: 100%; align-self: stretch; }
.view { width: 45px; display: flex; align-items: center; justify-content: center; }
.view-on { background: #c6c6c6; width: 46px; }
.zoom { display: flex; align-items: center; gap: 3px; margin-left: 9px; }
.slider { position: relative; width: 100px; height: 1px; background: #999; margin: 0 2px; }
.knob { position: absolute; left: 48px; top: -5px; width: 4px; height: 11px; background: #555; }
.pct { font-family: "Liberation Sans", sans-serif; font-size: 13px; margin-left: 22px; color: #666; padding-bottom: 3px; }

/* Menu */
.menu { position: absolute; left: 1136px; top: 135px; width: 226px; height: 344px; padding-top: 2px; background: #fff; border: 1px solid #c6c6c6; box-shadow: 1px 2px 4px rgba(0,0,0,.18); font-feature-settings: "palt"; }
.mi { height: 42px; display: flex; align-items: center; color: #444; white-space: nowrap; letter-spacing: -.7px; word-spacing: 3px; }
.mi-ic { width: 46px; display: flex; justify-content: center; flex: none; }
.mi-off { color: #b0b0b0; }
.mi u { margin: 0 1px; }

/* Annotations */
.redbox { position: absolute; border: 7px solid #f00; border-radius: 5px; pointer-events: none; }
.rb-home { left: 63px; top: 32px; width: 68px; height: 37px; }
.rb-range { left: 316px; top: 300px; width: 107px; height: 239px; }
.rb-fill { left: 1153px; top: 101px; width: 56px; height: 37px; }
.rb-series { left: 1134px; top: 346px; width: 230px; height: 50px; }
.callout { position: absolute; width: 40px; height: 40px; border-radius: 50%; background: #fff; box-shadow: 0 0 6px rgba(0,0,0,.25); display: flex; align-items: center; justify-content: center; }
.callout::before { content: ""; position: absolute; inset: 3px; border: 1.500px solid #f00; border-radius: 50%; background: radial-gradient(circle, #fff 45%, #e2e2e2 62%, #fff 78%); }
.callout span { position: relative; font-family: "Liberation Sans", sans-serif; font-weight: 700; font-size: 30px; line-height: 30px; color: #f00; -webkit-text-stroke: .6px #f00; }
.co-2 { left: 436px; top: 388px; }
.co-3 { left: 148px; top: 16px; }
.co-4 { left: 1101px; top: 99px; }
.co-5 { left: 1082px; top: 350px; }
```
